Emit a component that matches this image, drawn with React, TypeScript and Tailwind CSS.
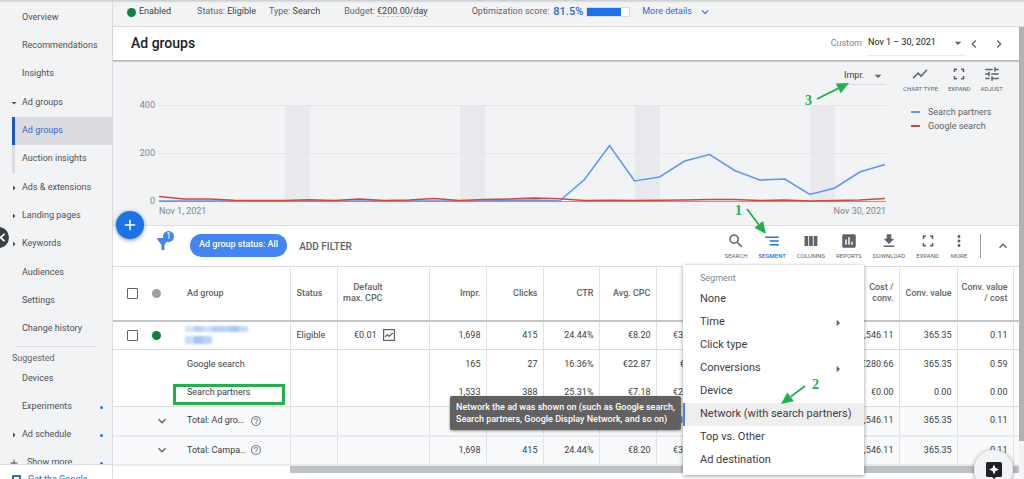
import React from 'react';
import type { ReactNode } from 'react';
import {
  MdSearch, MdSegment, MdAssessment, MdFileDownload, MdMoreVert, MdExpandLess,
  MdExpandMore, MdTune, MdShowChart, MdChevronLeft, MdChevronRight, MdArrowDropDown, MdArrowRight,
  MdFilterAlt, MdAdd, MdHelpOutline,
} from 'react-icons/md';

type NavItem = { label: string; arrow?: 'down' | 'right'; kind?: 'active' | 'sub'; dot?: boolean };

const navGroups: NavItem[][] = [
  [{ label: 'Overview' }, { label: 'Recommendations' }, { label: 'Insights' }],
  [
    { label: 'Ad groups', arrow: 'down' },
    { label: 'Ad groups', kind: 'active' },
    { label: 'Auction insights', kind: 'sub' },
  ],
  [
    { label: 'Ads & extensions', arrow: 'right' },
    { label: 'Landing pages', arrow: 'right' },
    { label: 'Keywords', arrow: 'right' },
  ],
  [{ label: 'Audiences' }, { label: 'Settings' }, { label: 'Change history' }],
];

const suggested: NavItem[] = [
  { label: 'Devices' },
  { label: 'Experiments', dot: true },
  { label: 'Ad schedule', arrow: 'right', dot: true },
];

function NavRow({ item }: { item: NavItem }) {
  const bar =
    item.kind === 'active'
      ? 'border-[#1a56c4] bg-[#dadce0] text-[#3367d6]'
      : item.kind === 'sub'
        ? 'border-[#dadce0] text-[#4d5156]'
        : 'border-transparent text-[#4d5156]';
  return (
    <li className="h-7 pl-3">
      <a href="#" className={`relative flex h-7 items-center border-l-3 pl-[7px] whitespace-nowrap ${bar}`}>
        {item.arrow === 'down' && <MdArrowDropDown className="absolute -left-[7px] size-3" />}
        {item.arrow === 'right' && <MdArrowRight className="absolute -left-[7px] size-3" />}
        {item.label}
        {item.dot && <span className="absolute right-[9px] size-[3px] rounded-full bg-[#1a73e8]" />}
      </a>
    </li>
  );
}

function Sidebar() {
  return (
    <aside className="relative flex w-[113px] shrink-0 flex-col border-r border-[#dadce0] bg-[#f1f3f4] text-[9px]">
      <nav className="flex min-h-0 flex-1 flex-col overflow-hidden pt-1">
        <div className="flex flex-col gap-px">
          {navGroups.map((group, i) => (
            <ul key={i}>
              {group.map((item, j) => (
                <NavRow key={j} item={item} />
              ))}
            </ul>
          ))}
        </div>
        <hr className="mt-[3px] mr-4 ml-4 border-[#dadce0]" />
        <h2 className="mt-1 pl-3 text-[9px] leading-[14px] text-[#5f6368]">Suggested</h2>
        <ul>
          {suggested.map((item) => (
            <NavRow key={item.label} item={item} />
          ))}
        </ul>
        <button className="relative flex h-7 shrink-0 items-center pl-2 text-[#4d5156]">
          <MdAdd className="mr-[7px] size-3" />
          Show more
          <span className="absolute right-[9px] size-[3px] rounded-full bg-[#1a73e8]" />
        </button>
      </nav>
      <a href="#" className="flex h-[15px] shrink-0 items-start gap-[7px] overflow-hidden border-t border-[#dadce0] bg-white pt-2 pl-3 text-[#3367d6]">
        <span className="mt-[2px] h-3 w-[9px] shrink-0 rounded-[1px] border-2 border-[#3367d6]" />
        <span className="leading-3 whitespace-nowrap">Get the Google</span>
      </a>
      <button aria-label="Collapse menu" className="absolute top-[227px] -left-3 flex size-[21px] items-center justify-end rounded-full bg-[#3c4043] text-white">
        <svg className="mr-[2px] size-[9px]" viewBox="0 0 9 9" fill="none" stroke="currentColor" strokeWidth="1.8" aria-hidden="true">
          <path d="M6.500 .8L2.500 4.500l4 3.700" />
        </svg>
      </button>
    </aside>
  );
}

function StatusBar() {
  return (
    <div className="flex h-[27px] items-center border-b border-[#dadce0] bg-[#f1f3f4] pb-[2px] pl-[14px] text-[9px] whitespace-nowrap text-[#5f6368]">
      <span className="mr-[3px] size-[9px] rounded-full bg-[#0d8043]" />
      <span className="mr-[26px] text-[#3c4043]">Enabled</span>
      <span className="mr-[13px]">Status: <span className="text-[#3c4043]">Eligible</span></span>
      <span className="mr-6">Type: <span className="text-[#3c4043]">Search</span></span>
      <span className="mr-[44px]">Budget: <span className="border-b border-dashed border-[#c4c7c9] text-[#3c4043]">€200.00/day</span></span>
      <span>Optimization score:</span>
      <span className="ml-1 text-[11px] font-medium text-[#3367d6]">81.5%</span>
      <span className="ml-[3px] h-[10px] w-11 border border-[#dadce0] bg-white">
        <span className="block h-full w-4/5 bg-[#1a73e8]" />
      </span>
      <a href="#" className="ml-3 flex items-center gap-[6px] text-[#3367d6]">
        More details <MdExpandMore className="size-[14px]" />
      </a>
    </div>
  );
}

function TitleBar() {
  return (
    <header className="relative z-10 flex h-[34px] items-center border-b border-[#b4b6b8] bg-white pl-[18px] shadow-[0_1px_1px_rgba(0,0,0,0.15)]">
      <h1 className="flex-1 text-[14px] font-medium text-[#202124]">Ad groups</h1>
      <div className="flex items-center text-[9px] whitespace-nowrap">
        <span className="mr-[6px] text-[#80868b]">Custom</span>
        <button className="flex h-6 w-[98px] items-center justify-between border-b border-[#e8eaed] text-[#202124]">
          Nov 1 – 30, 2021 <MdArrowDropDown className="size-4 text-[#5f6368]" />
        </button>
        <button aria-label="Previous period" className="text-[#5f6368]"><MdChevronLeft className="size-4" /></button>
        <button aria-label="Next period" className="mr-3 ml-[9px] text-[#5f6368]"><MdChevronRight className="size-4" /></button>
      </div>
    </header>
  );
}

const partners = [96, 96, 96, 96, 96, 96, 96, 96, 96, 96, 96, 96, 96, 96, 95.5, 95, 96, 74.5, 40.5, 76, 72, 56, 49.5, 65.5, 75, 74, 89.5, 83, 67, 59.5];
const google = [91.5, 94, 94, 95.2, 95.5, 95.5, 94.8, 95.5, 94, 95.5, 95, 93.5, 95.5, 94.5, 94, 93, 93.8, 95.5, 95.2, 95.5, 95.3, 95, 94.5, 94.5, 95.5, 95, 96, 95.5, 95, 93.5];
const toPoints = (ys: number[]) => ys.map((y, i) => `${(i * 25.03).toFixed(1)},${y}`).join(' ');

function Tool({ icon, label, active }: { icon: ReactNode; label: string; active?: boolean }) {
  return (
    <button className={`flex flex-col items-center gap-[2px] text-[6px] leading-[8px] whitespace-nowrap uppercase ${active ? 'font-medium text-[#1a73e8]' : 'text-[#5f6368]'}`}>
      {icon}
      {label}
    </button>
  );
}

function ExpandIcon() {
  return (
    <svg className="size-[18px]" viewBox="0 0 18 18" fill="none" stroke="currentColor" strokeWidth="1.6" aria-hidden="true">
      <path d="M4.500 7V4.300H7M11 4.300h2.500V7M13.500 11v2.700H11M7 13.700H4.500V11" />
    </svg>
  );
}

function Chart() {
  return (
    <section className="flex h-[165px] border-b border-[#dadce0] bg-[#f1f3f4]">
      <div className="flex min-w-0 flex-1 flex-col">
        <div className="flex h-11 justify-end">
          <button className="mt-[6px] flex h-[18px] w-[42px] items-center justify-between border-b border-[#dadce0] text-[9px] text-[#3c4043]">
            Impr. <MdArrowDropDown className="size-4 text-[#5f6368]" />
          </button>
        </div>
        <div className="flex">
          <div className="-my-[6px] flex h-[108px] w-[46px] flex-col justify-between pr-1 text-right text-[9px] leading-3 text-[#80868b]">
            <span>400</span>
            <span>200</span>
            <span>0</span>
          </div>
          <svg className="h-[98px] min-w-0 flex-1" viewBox="0 0 727 98" preserveAspectRatio="none" aria-label="Impressions by day">
            {[126, 301, 476, 651].map((x) => (
              <rect key={x} x={x} y="0" width="25" height="96" fill="#e8eaed" />
            ))}
            <path d="M0 .5H727M0 48.5H727" stroke="#e4e6e8" />
            <path d="M0 96.5H727" stroke="#9aa0a6" />
            <polyline points={toPoints(partners)} fill="none" stroke="#5e97f6" strokeWidth="1.6" />
            <polyline points={toPoints(google)} fill="none" stroke="#db4437" strokeWidth="1.5" />
          </svg>
        </div>
        <div className="flex justify-between pt-[2px] pl-[46px] text-[9px] leading-3 text-[#80868b]">
          <span>Nov 1, 2021</span>
          <span>Nov 30, 2021</span>
        </div>
      </div>
      <div className="w-[133px] pt-1 pl-[17px]">
        <div className="flex gap-[10px]">
          <Tool icon={<MdShowChart className="size-[18px]" />} label="Chart type" />
          <Tool icon={<ExpandIcon />} label="Expand" />
          <Tool icon={<MdTune className="size-[18px]" />} label="Adjust" />
        </div>
        <ul className="mt-3 pl-2 text-[9px] leading-[14px] text-[#5f6368]">
          <li className="flex items-center gap-2"><span className="h-[2px] w-[9px] bg-[#5e97f6]" />Search partners</li>
          <li className="flex items-center gap-2"><span className="h-[2px] w-[9px] bg-[#db4437]" />Google search</li>
        </ul>
      </div>
    </section>
  );
}

function ColumnsIcon() {
  return (
    <svg className="size-[18px]" viewBox="0 0 18 18" fill="currentColor" aria-hidden="true">
      <path d="M2.500 4h3.700v10H2.500zM7.100 4h3.700v10H7.100zM11.700 4h3.700v10h-3.700z" />
    </svg>
  );
}

const segments = [
  { label: 'None' },
  { label: 'Time', more: true },
  { label: 'Click type' },
  { label: 'Conversions', more: true },
  { label: 'Device' },
  { label: 'Network (with search partners)', active: true },
  { label: 'Top vs. Other' },
  { label: 'Ad destination' },
];

function SegmentMenu() {
  return (
    <div className="absolute top-[39px] right-[155px] z-20 w-[181px] bg-white pt-1 pb-[3px] shadow-[0_1px_4px_rgba(0,0,0,0.4)]">
      <div className="pl-[17px] text-[9px] leading-[19px] text-[#80868b]">Segment</div>
      <ul role="menu">
        {segments.map((s) => (
          <li key={s.label} role="none">
            <button
              role="menuitem"
              className={`flex h-[23px] w-full items-center justify-between border-l-2 pr-[18px] pl-[15px] text-left text-[11px] whitespace-nowrap text-[#3c4043] ${s.active ? 'border-[#4285f4] bg-[#eeeeee]' : 'border-transparent'}`}
            >
              {s.label}
              {s.more && <MdArrowRight className="size-4 text-[#5f6368]" />}
            </button>
          </li>
        ))}
      </ul>
    </div>
  );
}

function Toolbar() {
  return (
    <div className="relative flex h-10 items-center">
      <button aria-label="Create ad group" className="absolute -top-[15px] left-[3px] z-10 flex size-7 items-center justify-center rounded-full bg-[#1a73e8] text-white shadow-[0_1px_4px_rgba(0,0,0,0.45)]">
        <MdAdd className="size-[18px]" />
      </button>
      <button aria-label="Filters, 1 applied" className="relative -mt-1 ml-[41px] text-[#4285f4]">
        <MdFilterAlt className="size-[18px]" />
        <span className="absolute -top-1 -right-[2px] flex size-[11px] items-center justify-center rounded-full bg-[#4285f4] text-[9px] text-white">1</span>
      </button>
      <button className="-mt-[2px] ml-[18px] h-[23px] rounded-full bg-[#4285f4] px-[9px] text-[9px] font-medium whitespace-nowrap text-white">Ad group status: All</button>
      <button className="ml-3 flex-1 text-left text-[10px] font-medium whitespace-nowrap text-[#5f6368]">ADD FILTER</button>
      <div className="flex gap-[11px]">
        <Tool icon={<MdSearch className="size-[18px]" />} label="Search" />
        <Tool icon={<MdSegment className="size-[18px]" />} label="Segment" active />
        <Tool icon={<ColumnsIcon />} label="Columns" />
        <Tool icon={<MdAssessment className="size-[18px]" />} label="Reports" />
        <Tool icon={<MdFileDownload className="size-[18px]" />} label="Download" />
        <Tool icon={<ExpandIcon />} label="Expand" />
        <Tool icon={<MdMoreVert className="size-[18px]" />} label="More" />
      </div>
      <span className="ml-3 h-6 w-px bg-[#9aa0a6]" />
      <button aria-label="Collapse table" className="mr-2 ml-[14px] text-[#5f6368]"><MdExpandLess className="size-4" /></button>
      <SegmentMenu />
    </div>
  );
}

const headers = ['Impr.', 'Clicks', 'CTR', 'Avg. CPC', 'Cost', 'Conv. rate', 'Conversions', 'Cost /\nconv.', 'Conv. value', 'Conv. value\n/ cost'];
const all = ['1,698', '415', '24.44%', '€8.20', '€3,401.44', '0.53%', '2.20', '€1,546.11', '365.35', '0.11'];
const searchRow = ['165', '27', '16.36%', '€22.87', '€617.45', '8.15%', '2.20', '€280.66', '365.35', '0.59'];
const partnerRow = ['1,533', '388', '25.31%', '€7.18', '€2,783.99', '0.00%', '0.00', '€0.00', '0.00', '0.00'];

const cell = 'border-r border-[#e0e2e4] pr-[5px] text-right';

function Numbers({ values }: { values: string[] }) {
  return (
    <>
      {values.map((v, i) => (
        <td key={i} className={cell}>{v}</td>
      ))}
      <td />
    </>
  );
}

function TotalRow({ label }: { label: string }) {
  return (
    <tr className="h-[29px] border-b-2 border-[#e8eaed] bg-[#f8f9fa]">
      <td />
      <td><button aria-label="Expand totals" className="ml-[2px] block text-[#5f6368]"><MdExpandMore className="size-4" /></button></td>
      <td className="border-r border-[#e0e2e4]">
        <span className="flex items-center">
          <span className="w-[63px]">{label}</span>
          <MdHelpOutline className="size-3 text-[#80868b]" />
        </span>
      </td>
      <td className="border-r border-[#e0e2e4]" />
      <td className="border-r border-[#e0e2e4]" />
      <Numbers values={all} />
    </tr>
  );
}

function BidIcon() {
  return (
    <svg className="size-3" viewBox="0 0 12 12" fill="none" stroke="#5f6368" strokeWidth="1.2" aria-hidden="true">
      <rect x=".6" y=".6" width="10.800" height="10.800" />
      <path d="M2 8l2.400-2.400L6.200 7.400 10 4" />
    </svg>
  );
}

const blurTop = ['bg-[#d8e6fa]', 'bg-[#b9d2f6]', 'bg-[#d0e1f9]', 'bg-[#b4cff5]', 'bg-[#b9d2f6]', 'bg-[#a9c8f4]', 'bg-[#c6dbf8]'];
const blurBottom = ['bg-[#c6dbf8]', 'bg-[#a4c4f3]', 'bg-[#b9d2f6]'];

function DataTable() {
  return (
    <div className="relative">
      <table className="w-full table-fixed border-collapse border-t border-[#dadce0] text-[9px] leading-[11px] text-[#3c4043]">
        <colgroup>
          <col className="w-[39px]" />
          <col className="w-[35px]" />
          <col />
          <col className="w-[47px]" />
          <col className="w-[92px]" />
          <col className="w-[57px]" />
          <col className="w-[57px]" />
          <col className="w-[56px]" />
          <col className="w-[57px]" />
          <col className="w-[62px]" />
          <col className="w-[62px]" />
          <col className="w-[62px]" />
          <col className="w-[57px]" />
          <col className="w-[58px]" />
          <col className="w-[56px]" />
          <col className="w-[6px]" />
        </colgroup>
        <thead>
          <tr className="h-[54px] border-b-2 border-[#c4c6c8] font-medium text-[#5f6368]">
            <th className="pl-[14px]"><input type="checkbox" aria-label="Select all ad groups" className="block size-[11px] appearance-none rounded-[1px] border border-[#5f6368] bg-white" /></th>
            <th><span className="block size-[9px] rounded-full bg-[#9aa0a6]" /></th>
            <th className="border-r border-[#e0e2e4] text-left font-medium">Ad group</th>
            <th className="border-r border-[#e0e2e4] pl-[6px] text-left font-medium">Status</th>
            <th className="border-r border-[#e0e2e4] pr-[46px] text-right font-medium">Default<br /><span className="whitespace-nowrap">max. CPC</span></th>
            {headers.map((h) => (
              <th key={h} className={`${cell} font-medium whitespace-pre`}>{h}</th>
            ))}
            <th />
          </tr>
        </thead>
        <tbody>
          <tr className="h-[29px] border-b border-[#dadce0]">
            <td className="pl-[14px]"><input type="checkbox" aria-label="Select ad group" className="block size-[11px] appearance-none rounded-[1px] border border-[#5f6368] bg-white" /></td>
            <td><span className="block size-[9px] rounded-full bg-[#0d8043]" /></td>
            <td className="border-r border-[#e0e2e4]">
              <span className="-ml-[2px] flex flex-col gap-1 blur-[1px]">
                <span className="flex">
                  {blurTop.map((c, i) => <span key={i} className={`h-[6px] w-[9px] ${c}`} />)}
                </span>
                <span className="flex">
                  {blurBottom.map((c, i) => <span key={i} className={`h-2 w-[9px] ${c}`} />)}
                </span>
              </span>
            </td>
            <td className="border-r border-[#e0e2e4] pl-[6px]">Eligible</td>
            <td className="border-r border-[#e0e2e4]">
              <span className="flex items-center justify-end gap-[6px] pr-[34px]">€0.01 <BidIcon /></span>
            </td>
            <Numbers values={all} />
          </tr>
          <tr className="h-[29px]">
            <td /><td />
            <td className="border-r border-[#e0e2e4]">Google search</td>
            <td className="border-r border-[#e0e2e4]" />
            <td className="border-r border-[#e0e2e4]" />
            <Numbers values={searchRow} />
          </tr>
          <tr className="h-7 border-b border-[#dadce0]">
            <td /><td />
            <td className="relative border-r border-[#e0e2e4]">
              Search partners
              <span className="absolute top-[5px] -left-[14px] h-[21px] w-[112px] border-3 border-[#22b14c]" />
            </td>
            <td className="border-r border-[#e0e2e4]" />
            <td className="border-r border-[#e0e2e4]" />
            <Numbers values={partnerRow} />
          </tr>
          <TotalRow label="Total: Ad gro…" />
          <TotalRow label="Total: Campa…" />
        </tbody>
      </table>
      <div className="ml-[177px] h-[7px] bg-[#bdc1c6]" />
      <div role="tooltip" className="absolute top-[130px] left-[337px] z-20 rounded-[2px] bg-[#616161] px-[6px] py-[5px] text-[9px] leading-3 font-medium whitespace-nowrap text-white shadow-[0_1px_3px_rgba(0,0,0,0.4)]">
        Network the ad was shown on (such as Google search,
        <br />
        Search partners, Google Display Network, and so on)
      </div>
    </div>
  );
}

const arrows = [
  { n: '1', num: 'top-[202px] right-[282px]', x1: 747, y1: 209, tip: [766, 234] },
  { n: '2', num: 'top-[376px] right-[205px]', x1: 805, y1: 386, tip: [781, 404] },
  { n: '3', num: 'top-[92px] right-[212px]', x1: 817, y1: 99, tip: [849, 83] },
];

function Annotations() {
  return (
    <div className="pointer-events-none absolute inset-0 z-30 font-['Liberation_Serif',serif] text-[14px] leading-[18px] font-bold text-[#22b14c]">
      <svg className="absolute top-0 right-0 h-[479px] w-[1024px]" viewBox="0 0 1024 479" aria-hidden="true">
        {arrows.map((a) => {
          const [tx, ty] = a.tip;
          const len = Math.hypot(tx - a.x1, ty - a.y1);
          const ux = (tx - a.x1) / len;
          const uy = (ty - a.y1) / len;
          const bx = tx - ux * 12;
          const by = ty - uy * 12;
          return (
            <g key={a.n}>
              <line x1={a.x1} y1={a.y1} x2={bx} y2={by} stroke="#22b14c" strokeWidth="1.8" />
              <polygon points={`${tx},${ty} ${bx - uy * 5.5},${by + ux * 5.5} ${bx + uy * 5.5},${by - ux * 5.5}`} fill="#22b14c" />
            </g>
          );
        })}
      </svg>
      {arrows.map((a) => (
        <span key={a.n} className={`absolute ${a.num}`}>{a.n}</span>
      ))}
    </div>
  );
}

export default function App() {
  return (
    <div className="relative flex h-screen overflow-hidden bg-white font-['Roboto',sans-serif]">
      <Sidebar />
      <div className="flex min-w-0 flex-1 flex-col">
        <StatusBar />
        <div className="flex min-h-0 flex-1">
          <main className="min-w-0 flex-1">
            <TitleBar />
            <Chart />
            <Toolbar />
            <DataTable />
          </main>
          <div className="w-[5px] shrink-0 bg-[#f1f3f4]">
            <div className="h-[414px] bg-[#b0b2b4]" />
          </div>
        </div>
      </div>
      <div className="pointer-events-none absolute inset-x-0 top-0 h-[3px] bg-linear-to-b from-[#c8cacc] to-transparent" />
      <button aria-label="Feedback" className="absolute right-[11px] -bottom-[10px] z-20 flex size-[39px] items-center justify-center rounded-full bg-[#f1f3f4] shadow-[0_1px_5px_rgba(0,0,0,0.4)]">
        <svg className="size-[18px]" viewBox="0 0 18 18" aria-hidden="true">
          <path d="M2.500 1h13a1.500 1.500 0 0 1 1.500 1.500v12a1.500 1.500 0 0 1-1.500 1.500H11l-2 2-2-2H2.500A1.500 1.500 0 0 1 1 14.500v-12A1.500 1.500 0 0 1 2.500 1z" fill="#202124" />
          <path d="M9 3.500l1.500 3.500L14 8.500 10.500 10 9 13.500 7.500 10 4 8.500 7.500 7z" fill="#fff" />
        </svg>
      </button>
      <Annotations />
    </div>
  );
}
